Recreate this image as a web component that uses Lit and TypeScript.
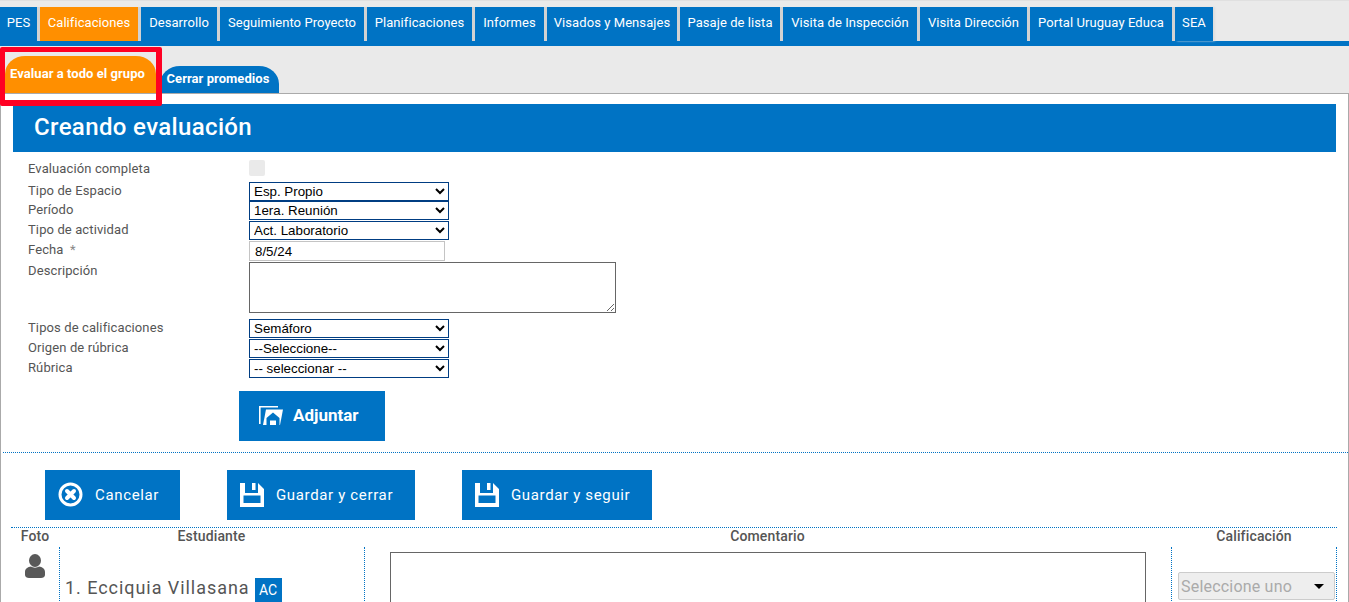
import { LitElement, html, css, svg } from "lit";
import { customElement } from "lit/decorators.js";

const MAIN_TABS: [string, number, boolean?][] = [
  ["PES", 37], ["Calificaciones", 98, true], ["Desarrollo", 76], ["Seguimiento Proyecto", 144],
  ["Planificaciones", 105], ["Informes", 69], ["Visados y Mensajes", 130], ["Pasaje de lista", 100],
  ["Visita de Inspección", 134], ["Visita Dirección", 107], ["Portal Uruguay Educa", 142], ["SEA", 38],
];

const saveIcon = svg`<svg class="ico" width="24" height="24" viewBox="0 0 24 24"><path fill="#fff" fill-rule="evenodd" d="M0 0H18L24 6V24H0ZM5 0V10H18V0H15.500V7H12V0ZM3.500 12.500V20H20.500V12.500Z"/></svg>`;

@customElement("app-root")
export class AppRoot extends LitElement {
  static styles = css`
    :host { display: block; height: 602px; overflow: hidden; background: #fff; font-family: Roboto, "Liberation Sans", sans-serif; color: #555; font-size: 13px; }
    * { box-sizing: border-box; }
    .top { background: #eaeaea; border-top: 1px solid #e0e0e0; padding-top: 6px; }
    .tabs { display: flex; height: 34px; }
    .tab { background: #0073c4; color: #fff; height: 34px; margin-right: 3px; display: flex; align-items: center; justify-content: center; letter-spacing: .07px; white-space: nowrap; box-shadow: 3px 0 0 #d2d2d2; padding-bottom: 3px; }
    .tab.on { background: #ff8f00; }
    .tab:last-child { box-shadow: 2px 0 2px #ddd; }
    .tabbar { height: 5px; background: #0073c4; }
    .subtabs { display: flex; align-items: flex-end; height: 47px; padding-left: 5px; gap: 4px; }
    .sub { color: #fff; font-weight: 700; font-size: 13px; letter-spacing: .05px; display: flex; justify-content: center; white-space: nowrap; border-radius: 20px 20px 0 0 / 18px 18px 0 0; }
    .sub.a { background: #ff8f00; width: 151px; height: 37px; padding: 10px 6px 0 0; }
    .sub.b { background: #0073c4; width: 119px; height: 27px; padding: 5px 3px 0 0; }
    .frame { position: absolute; left: 0; top: 47px; width: 162px; height: 59px; border: 6px solid #ff0023; border-left-width: 5px; border-top-width: 5px; border-radius: 2px; pointer-events: none; }
    .panel { border: 1px solid #aaa; border-bottom: 0; background: #fff; padding-top: 10px; height: 509px; }
    h1 { margin: 0 12px; height: 48px; background: #0073c4; color: #fff; font: 500 24px/46px Roboto, sans-serif; letter-spacing: .36px; padding-left: 21px; }
    .form { display: grid; grid-template-columns: 221px 1fr; padding: 8px 0 0 27px; row-gap: 1px; align-items: start; }
    .form label { line-height: 17px; letter-spacing: .11px; }
    .req { margin-left: 3px; color: #888; }
    select.n { display: block; width: 200px; height: 19px; border: 1px solid #003d82; border-radius: 0; background: #fff; color: #000; font: 13.33px "Liberation Sans", Arial, sans-serif; padding: 0; outline: 0; }
    .check { appearance: none; display: block; margin: 0; width: 16px; height: 16px; background: #eaeaea; border-radius: 2px; }
    .gap4 { margin-top: 4px; }
    .gap5 { margin-top: 5px; }
    .tight { margin-top: -1px; }
    .date { display: block; width: 196px; height: 20px; border: 1px solid #c4c4c4; font: 13.33px "Liberation Sans", Arial, sans-serif; color: #000; padding: 0 5px; }
    .desc { display: block; width: 367px; height: 51px; border: 1px solid #666; margin: 0; }
    .btn { display: inline-flex; align-items: center; height: 50px; background: #0073c4; color: #fff; font-size: 15px; letter-spacing: .65px; white-space: nowrap; padding-bottom: 1px; }
    .attach { margin: 13px 0 0 238px; width: 146px; padding-left: 20px; gap: 10px; font-weight: 700; font-size: 17px; letter-spacing: 0; display: flex; padding-bottom: 2px; }
    .rule { border-top: 1px dotted #0073c4; }
    .r1 { margin: 11px 0 0 2px; }
    .actions { display: flex; padding: 17px 0 7px 44px; gap: 47px; }
    .cancel { width: 135px; padding-left: 13px; gap: 12px; }
    .s1 { width: 188px; padding-left: 13px; gap: 12px; }
    .s2 { width: 190px; padding-left: 13px; gap: 12px; }
    .ico { display: block; flex: none; }
    .table { margin-left: 10px; width: 1326px; }
    .cols { display: grid; grid-template-columns: 48px 305px 807px 166px; }
    .th { height: 19px; text-align: center; font-weight: 500; font-size: 14px; line-height: 17px; letter-spacing: .15px; }
    .td { height: 60px; border-left: 1px dotted #0073c4; }
    .td:first-child { border-left: 0; display: flex; justify-content: center; padding-top: 7px; }
    .td.last { border-right: 1px dotted #0073c4; padding: 25px 0 0 6px; }
    .name { display: flex; align-items: flex-start; padding: 31px 0 0 5px; font-size: 18px; letter-spacing: .95px; line-height: 20px; white-space: nowrap; }
    .badge { background: #0073c4; color: #fff; font-size: 14px; width: 27px; height: 24px; line-height: 25px; text-align: center; margin-left: 5px; letter-spacing: 0; }
    .comment { padding: 5px 0 0 25px; }
    .comment textarea { display: block; margin: 0; width: 756px; height: 100px; border: 1px solid #666; }
    .pick { display: flex; justify-content: space-between; align-items: center; width: 157px; height: 28px; background: #eee; border: 1px solid #ccc; border-radius: 2px; color: #aaa; font-size: 16px; letter-spacing: .2px; padding: 0 10px 0 2px; }
    .caret { width: 0; height: 0; border: 5px solid transparent; border-top: 5px solid #000; border-bottom: 0; }
  `;

  private select(text: string) {
    return html`<select class="n"><option>${text}</option></select>`;
  }

  render() {
    return html`
      <div class="top">
        <div class="tabs">
          ${MAIN_TABS.map(([t, w, on]) => html`<div class="tab ${on ? "on" : ""}" style="width:${w}px">${t}</div>`)}
        </div>
        <div class="tabbar"></div>
        <div class="subtabs">
          <div class="sub a">Evaluar a todo el grupo</div>
          <div class="sub b">Cerrar promedios</div>
        </div>
      </div>
      <div class="frame"></div>
      <div class="panel">
        <h1>Creando evaluación</h1>
        <div class="form">
          <label>Evaluación completa</label><input class="check" type="checkbox" disabled />
          <label class="gap4">Tipo de Espacio</label><div class="gap4">${this.select("Esp. Propio")}</div>
          <label class="tight">Período</label><div class="tight">${this.select("1era. Reunión")}</div>
          <label>Tipo de actividad</label>${this.select("Act. Laboratorio")}
          <label>Fecha <span class="req">*</span></label><input class="date" value="8/5/24" />
          <label>Descripción</label><textarea class="desc"></textarea>
          <label class="gap5">Tipos de calificaciones</label><div class="gap5">${this.select("Semáforo")}</div>
          <label>Origen de rúbrica</label>${this.select("--Seleccione--")}
          <label>Rúbrica</label>${this.select("-- seleccionar --")}
        </div>
        <div class="btn attach">
          <svg class="ico" width="24" height="20" viewBox="0 0 24 20"><path fill="none" stroke="#fff" stroke-width="1.600" d="M.8 19V1.800H19"/><path fill="#fff" d="M4 20L7 4.500H24L21 20Z"/><path fill="#0073c4" d="M7.500 20V13L14 7.500L20.500 13V20H17V15.500H11V20Z"/></svg>
          Adjuntar
        </div>
        <div class="rule r1"></div>
        <div class="actions">
          <div class="btn cancel">
            <svg class="ico" width="25" height="25" viewBox="0 0 25 25"><circle cx="12.500" cy="12.500" r="10.500" fill="none" stroke="#fff" stroke-width="3"/><path stroke="#fff" stroke-width="4" stroke-linecap="round" d="M9 9L16 16M16 9L9 16"/></svg>
            Cancelar
          </div>
          <div class="btn s1">${saveIcon}Guardar y cerrar</div>
          <div class="btn s2">${saveIcon}Guardar y seguir</div>
        </div>
        <div class="rule table"></div>
        <div class="table">
          <div class="cols">
            <div class="th">Foto</div><div class="th">Estudiante</div><div class="th">Comentario</div><div class="th">Calificación</div>
          </div>
          <div class="cols">
            <div class="td">
              <svg class="ico" width="20" height="24" viewBox="0 0 20 24"><ellipse cx="10" cy="6.500" rx="6" ry="6.500" fill="#595959"/><path fill="#595959" d="M0 18C0 14.500 3 13 6 12.500C8 14 12 14 14 12.500C17 13 20 14.500 20 18V21C20 23 18 24 16 24H4C2 24 0 23 0 21Z"/></svg>
            </div>
            <div class="td"><div class="name">1. Ecciquia Villasana<span class="badge">AC</span></div></div>
            <div class="td comment"><textarea></textarea></div>
            <div class="td last"><div class="pick">Seleccione uno<span class="caret"></span></div></div>
          </div>
        </div>
      </div>
    `;
  }
}
